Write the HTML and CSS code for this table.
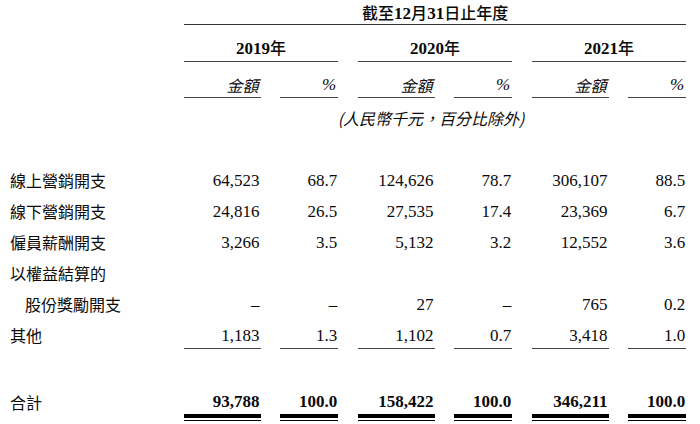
FILE: index.html
```html
<!DOCTYPE html>
<html lang="zh-Hant">
<head>
<meta charset="utf-8">
<title>營銷開支</title>
<link rel="stylesheet" href="styles.css">
</head>
<body>
<div class="table">
  <div class="lbl"></div>
  <div class="hdr"><span class="cjk">截至</span><b>12</b><span class="cjk">月</span><b>31</b><span class="cjk">日止年度</span></div>

  <div class="lbl"></div>
  <div class="year"><b>2019</b><span class="cjk">年</span></div>
  <div class="year"><b>2020</b><span class="cjk">年</span></div>
  <div class="year"><b>2021</b><span class="cjk">年</span></div>

  <div class="lbl"></div>
  <div class="sub">金額</div><div class="sub pct">%</div>
  <div class="sub">金額</div><div class="sub pct">%</div>
  <div class="sub">金額</div><div class="sub pct">%</div>

  <div class="lbl"></div>
  <div class="note">(人民幣千元，百分比除外)</div>

  <div class="lbl d first">線上營銷開支</div>
  <div class="num d first">64,523</div><div class="num d first">68.7</div>
  <div class="num d first">124,626</div><div class="num d first">78.7</div>
  <div class="num d first">306,107</div><div class="num d first">88.5</div>

  <div class="lbl d">線下營銷開支</div>
  <div class="num d">24,816</div><div class="num d">26.5</div>
  <div class="num d">27,535</div><div class="num d">17.4</div>
  <div class="num d">23,369</div><div class="num d">6.7</div>

  <div class="lbl d">僱員薪酬開支</div>
  <div class="num d">3,266</div><div class="num d">3.5</div>
  <div class="num d">5,132</div><div class="num d">3.2</div>
  <div class="num d">12,552</div><div class="num d">3.6</div>

  <div class="lbl d">以權益結算的</div>
  <div class="num d"></div><div class="num d"></div>
  <div class="num d"></div><div class="num d"></div>
  <div class="num d"></div><div class="num d"></div>

  <div class="lbl d indent">股份獎勵開支</div>
  <div class="num d">–</div><div class="num d">–</div>
  <div class="num d">27</div><div class="num d">–</div>
  <div class="num d">765</div><div class="num d">0.2</div>

  <div class="lbl d last">其他</div>
  <div class="num d last ul">1,183</div><div class="num d last ul">1.3</div>
  <div class="num d last ul">1,102</div><div class="num d last ul">0.7</div>
  <div class="num d last ul">3,418</div><div class="num d last ul">1.0</div>

  <div class="lbl total">合計</div>
  <div class="tot"><span>93,788</span></div><div class="tot"><span>100.0</span></div>
  <div class="tot"><span>158,422</span></div><div class="tot"><span>100.0</span></div>
  <div class="tot"><span>346,211</span></div><div class="tot"><span>100.0</span></div>
</div>
</body>
</html>
```

FILE: styles.css
```css
html, body {
  margin: 0;
  padding: 0;
  background: #ffffff;
}

body {
  color: #0a0a0a;
  font-family: "Liberation Serif", "Noto Sans CJK TC", serif;
  font-size: 17px;
}

.table {
  display: grid;
  grid-template-columns: 164.25px repeat(3, 76.5px 58px);
  column-gap: 19.75px;
}

.cjk {
  font-family: "Noto Sans CJK TC", sans-serif;
  font-size: 16px;
  font-weight: 500;
}

.hdr {
  grid-column: 2 / -1;
  height: 24px;
  line-height: 24px;
  text-align: center;
  border-bottom: 1px solid #333333;
  white-space: nowrap;
}

.year {
  grid-column: span 2;
  padding: 12px 0 2px;
  line-height: 20px;
  text-align: center;
  border-bottom: 1px solid #444444;
}

.sub {
  padding: 13px 2px 2px 0;
  line-height: 20px;
  text-align: right;
  font-family: "Noto Sans CJK TC", sans-serif;
  font-size: 16px;
  font-style: italic;
  border-bottom: 1px solid #444444;
}

.sub.pct {
  font-family: "Liberation Serif", serif;
  font-size: 17px;
}

.note {
  grid-column: 2 / -1;
  padding: 10px 8px 36px 0;
  line-height: 20px;
  text-align: center;
  font-family: "Noto Sans CJK TC", sans-serif;
  font-size: 16px;
  font-style: italic;
}

.lbl {
  font-family: "Noto Sans CJK TC", sans-serif;
  font-size: 16px;
  padding-left: 10px;
  white-space: nowrap;
}

.lbl.indent {
  padding-left: 25px;
}

.d {
  height: 31px;
  line-height: 31px;
}

.d.first {
  height: 32px;
  line-height: 33px;
}

.d.last {
  height: 28px;
  line-height: 31px;
}

.num {
  text-align: right;
  padding-right: 1px;
}

.ul {
  border-bottom: 1px solid #444444;
}

.total {
  padding-top: 43px;
  line-height: 20px;
}

.tot {
  padding-top: 43px;
  border-bottom: 1px solid #000000;
  padding-bottom: 2px;
}

.tot span {
  display: block;
  line-height: 20px;
  padding: 0 1px 2px 0;
  text-align: right;
  font-weight: bold;
  border-bottom: 4px solid #000000;
}
```
